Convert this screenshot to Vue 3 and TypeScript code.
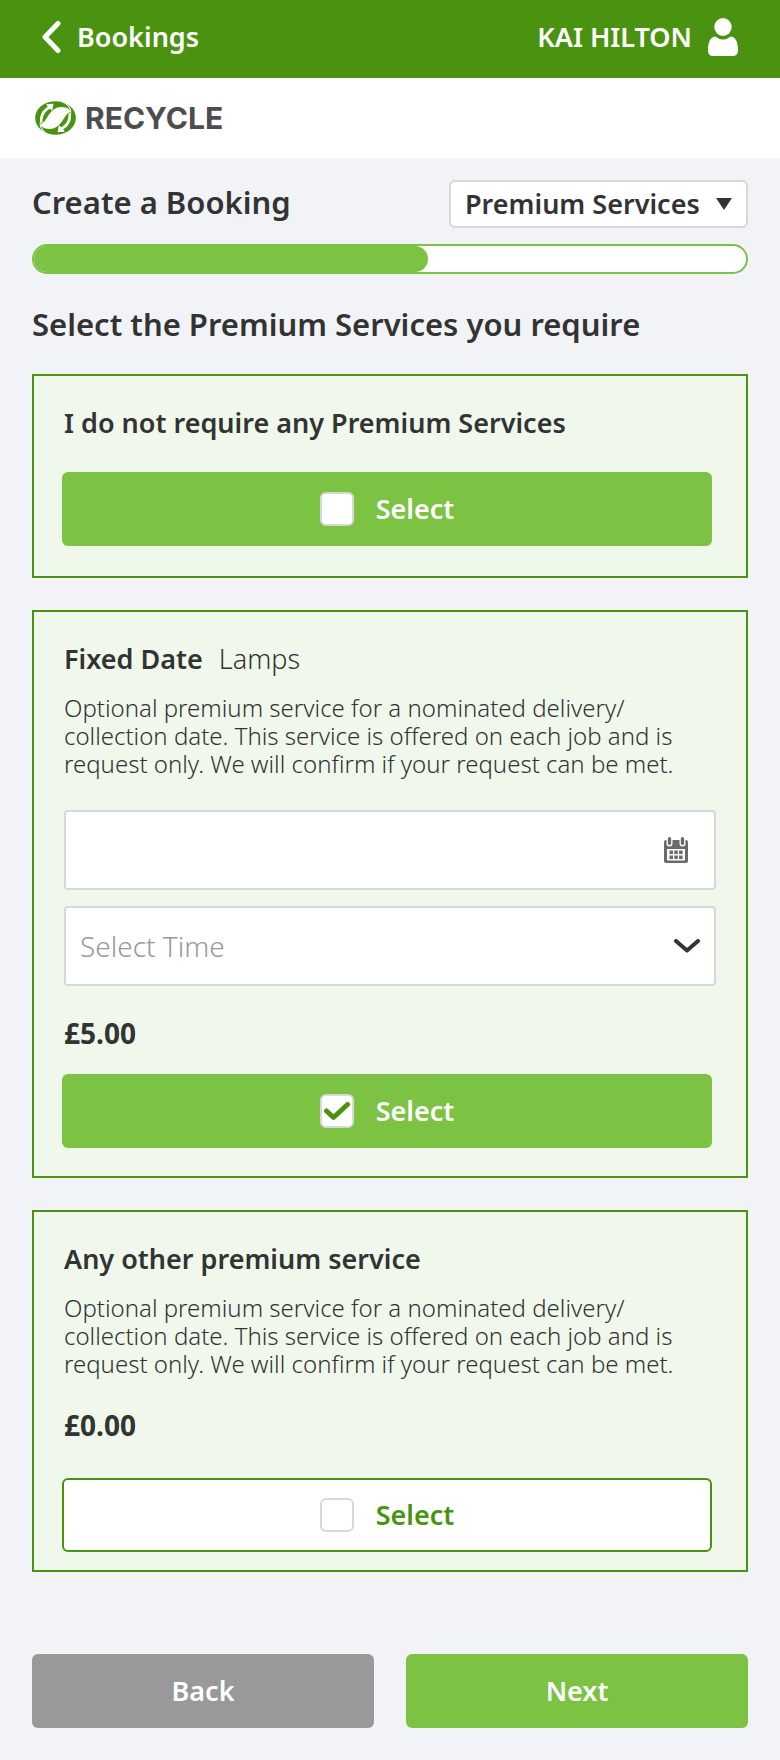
<script setup lang="ts">
import { ref } from 'vue'

interface Service {
  id: string
  title: string
  tag?: string
  description?: string
  scheduled?: boolean
  price?: string
  selected: boolean
  outlined?: boolean
}

// The zero-width space lets the line wrap after the slash.
const description =
  'Optional premium service for a nominated delivery/\u200bcollection date. This service is offered on each job and is request only. We will confirm if your request can be met.'

const step = ref('Premium Services')
const progress = ref(55.3)
const date = ref('')
const time = ref('')

const services = ref<Service[]>([
  { id: 'none', title: 'I do not require any Premium Services', selected: false },
  {
    id: 'fixed-date',
    title: 'Fixed Date',
    tag: 'Lamps',
    description,
    scheduled: true,
    price: '£5.00',
    selected: true,
  },
  {
    id: 'other',
    title: 'Any other premium service',
    description,
    price: '£0.00',
    selected: false,
    outlined: true,
  },
])
</script>

<template>
  <div class="page">
    <header class="topbar">
      <a class="back-link" href="#bookings">
        <svg width="20" height="34" viewBox="0 0 20 34" aria-hidden="true">
          <path d="M17 3.500L4 17l13 13.500" fill="none" stroke="#fff" stroke-width="5" stroke-linecap="round" stroke-linejoin="round" />
        </svg>
        <span>Bookings</span>
      </a>
      <a class="account" href="#account">
        <span>KAI HILTON</span>
        <svg width="30" height="38" viewBox="0 0 30 38" aria-hidden="true">
          <ellipse cx="15" cy="9" rx="8.700" ry="9" fill="#fff" />
          <path d="M7 18.500C10 20 11 21.500 15 21.500S20 20 23 18.500C28 19 30 25 30 32C30 36.500 28 38 24.500 38H5.500C2 38 0 36.500 0 32C0 25 2 19 7 18.500Z" fill="#fff" />
        </svg>
      </a>
    </header>

    <div class="brand">
      <svg width="41" height="34" viewBox="-61.500 -51 123 102" aria-hidden="true">
        <ellipse rx="61" ry="50.500" fill="#4a9310" />
        <g fill="#fff">
          <path d="M-45 18C-40 17 -35 14 -26 0C-14 -20 -2 -33 18 -33C36 -33 44 -24 45 -18C40 -17 35 -14 26 0C14 20 2 33 -18 33C-36 33 -44 24 -45 18Z" />
          <g v-for="turn in [0, 180]" :key="turn" :transform="`rotate(${turn})`">
            <path d="M-46 14C-49 -8 -40 -24 -23 -34L-28 -41L-6 -43L-10 -22L-17 -28C-32 -20 -40 -6 -39 14Z" />
            <path d="M-46 8C-45 30 -34 44 -13 51L-19 51C-38 43 -52 28 -46 8Z" />
          </g>
        </g>
      </svg>
      <span class="brand-name">RECYCLE</span>
    </div>

    <main class="content">
      <div class="title-row">
        <h1>Create a Booking</h1>
        <div class="picker step-picker">
          <select v-model="step" aria-label="Booking step">
            <option>Premium Services</option>
          </select>
          <svg width="16" height="12" viewBox="0 0 16 12" aria-hidden="true">
            <path d="M0 0H16L8 12Z" fill="#333" />
          </svg>
        </div>
      </div>

      <div class="progress" role="progressbar" aria-label="Booking progress" aria-valuemin="0" aria-valuemax="100" :aria-valuenow="progress">
        <div class="progress-fill" :style="{ width: progress + '%' }"></div>
      </div>

      <h2>Select the Premium Services you require</h2>

      <section v-for="service in services" :key="service.id" class="card" :class="service.id">
        <h3>
          {{ service.title }}<span v-if="service.tag" class="tag">{{ service.tag }}</span>
        </h3>
        <p v-if="service.description" class="description">{{ service.description }}</p>

        <div v-if="service.scheduled" class="fields">
          <div class="date-field">
            <input v-model="date" type="text" aria-label="Date" />
            <button type="button" aria-label="Open calendar">
              <svg width="24" height="26" viewBox="0 0 24 26" aria-hidden="true">
                <path fill="#6b6b6b" fill-rule="evenodd" d="M2 3H22Q24 3 24 5V24Q24 26 22 26H2Q0 26 0 24V5Q0 3 2 3ZM3 12V23.500H21V12Z" />
                <path stroke="#fff" stroke-width="6" d="M5.500 2V6.500M18.500 2V6.500" stroke-linecap="round" />
                <path stroke="#6b6b6b" stroke-width="3.400" d="M5.500 1.700V6.300M18.500 1.700V6.300" stroke-linecap="round" />
                <path fill="#6b6b6b" d="M5.500 13.500H9V17H5.500ZM10.300 13.500H13.800V17H10.300ZM15.100 13.500H18.600V17H15.100ZM5.500 18.500H9V22H5.500ZM10.300 18.500H13.800V22H10.300ZM15.100 18.500H18.600V22H15.100Z" />
              </svg>
            </button>
          </div>
          <div class="picker time-picker">
            <select v-model="time" aria-label="Time">
              <option value="">Select Time</option>
            </select>
            <svg width="26" height="15" viewBox="0 0 26 15" aria-hidden="true">
              <path d="M2 2L13 11.500L24 2" fill="none" stroke="#333" stroke-width="4" stroke-linecap="round" stroke-linejoin="round" />
            </svg>
          </div>
        </div>

        <p v-if="service.price" class="price">{{ service.price }}</p>

        <label class="toggle" :class="{ outlined: service.outlined }">
          <span class="box">
            <input v-model="service.selected" type="checkbox" />
            <svg v-if="service.selected" width="28" height="20" viewBox="0 0 28 20" aria-hidden="true">
              <path d="M3.500 10L10.500 16.500L24.500 3.500" fill="none" stroke="#4a9310" stroke-width="5" stroke-linecap="round" stroke-linejoin="round" />
            </svg>
          </span>
          <span>Select</span>
        </label>
      </section>

      <div class="actions">
        <button type="button" class="secondary">Back</button>
        <button type="button">Next</button>
      </div>
    </main>
  </div>
</template>

<style>
body {
  background: #f1f3f7;
}
</style>

<style scoped>
.page {
  color: #333;
  font-family: "Noto Sans", "Open Sans", sans-serif;
  font-size: 27px;
  line-height: 34px;
}

.page * {
  box-sizing: border-box;
}

h1,
h2,
h3,
p {
  margin: 0;
}

input,
select,
button {
  margin: 0;
  font: inherit;
  color: inherit;
}

svg {
  display: block;
  flex: none;
}

.topbar {
  display: flex;
  align-items: center;
  justify-content: space-between;
  height: 78px;
  padding: 0 42px 4px 41px;
  background: #4a9310;
}

.topbar a {
  display: flex;
  align-items: center;
  gap: 16px;
  color: #fff;
  text-decoration: none;
  font-weight: 600;
}

.brand {
  display: flex;
  align-items: center;
  gap: 9px;
  height: 80px;
  padding: 0 35px;
  background: #fff;
}

.brand-name {
  color: #4d4d4d;
  font-family: Inter, sans-serif;
  font-size: 30px;
  font-weight: 700;
}

.content {
  padding: 22px 32px 32px;
}

.title-row {
  display: flex;
  justify-content: space-between;
  align-items: flex-start;
}

h1,
h2 {
  font-size: 31px;
  line-height: 44px;
  font-weight: 600;
}

.picker {
  display: grid;
  align-items: center;
}

.picker > * {
  grid-area: 1 / 1;
}

.picker svg {
  justify-self: end;
  margin-right: 16px;
  pointer-events: none;
}

.picker select {
  width: 100%;
  appearance: none;
  border: 2px solid #d8d8d8;
  background: #fff;
}

.step-picker select {
  height: 48px;
  padding: 0 46px 0 14px;
  border-radius: 6px;
  font-weight: 600;
}

.progress {
  height: 30px;
  margin-top: 16px;
  overflow: hidden;
  border: 2px solid #7cc243;
  border-radius: 15px;
  background: #fff;
}

.progress-fill {
  height: 100%;
  border-radius: 0 13px 13px 0;
  background: #7cc243;
}

h2 {
  margin: 28px 0;
}

.card {
  padding: 30px;
  border: 2px solid #4a9310;
  background: #f0f8ec;
}

.card + .card {
  margin-top: 32px;
}

.card.fixed-date {
  padding-bottom: 28px;
}

.card.other {
  padding-bottom: 18px;
}

h3 {
  font-size: 27px;
  font-weight: 600;
}

.tag {
  margin-left: 16px;
  font-weight: 300;
}

.description {
  margin-top: 18px;
  font-size: 24px;
  line-height: 28px;
  font-weight: 300;
}

.fields {
  display: grid;
  gap: 16px;
  margin-top: 32px;
}

.date-field {
  display: flex;
  align-items: center;
  height: 80px;
  padding-right: 26px;
  border: 2px solid #d8d8d8;
  border-radius: 4px;
  background: #fff;
}

.date-field input {
  flex: 1;
  min-width: 0;
  height: 100%;
  padding: 0 14px;
  border: 0;
  background: none;
  outline: none;
}

.date-field button {
  padding: 0;
  border: 0;
  background: none;
}

.time-picker select {
  height: 80px;
  padding: 0 46px 0 14px;
  border-radius: 4px;
  color: #999;
  font-size: 28px;
  font-weight: 300;
}

.price {
  margin-top: 30px;
  font-size: 28px;
  font-weight: 700;
}

.toggle,
.actions button {
  display: flex;
  align-items: center;
  justify-content: center;
  height: 74px;
  border: 0;
  border-radius: 6px;
  background: #7cc243;
  color: #fff;
  font-weight: 600;
}

.toggle {
  gap: 22px;
  margin: 32px 4px 0 -2px;
}

.fixed-date .toggle {
  margin-top: 24px;
}

.other .toggle {
  margin-top: 36px;
}

.toggle.outlined {
  border: 2px solid #4a9310;
  background: #fff;
  color: #4a9310;
}

.box {
  display: grid;
  place-items: center;
}

.box > * {
  grid-area: 1 / 1;
}

.box input {
  width: 34px;
  height: 34px;
  appearance: none;
  border: 2px solid #d8d8d8;
  border-radius: 6px;
  background: #fff;
}

.box svg {
  pointer-events: none;
}

.actions {
  display: grid;
  grid-template-columns: 1fr 1fr;
  gap: 32px;
  margin-top: 82px;
}

.actions .secondary {
  background: #999;
}
</style>
